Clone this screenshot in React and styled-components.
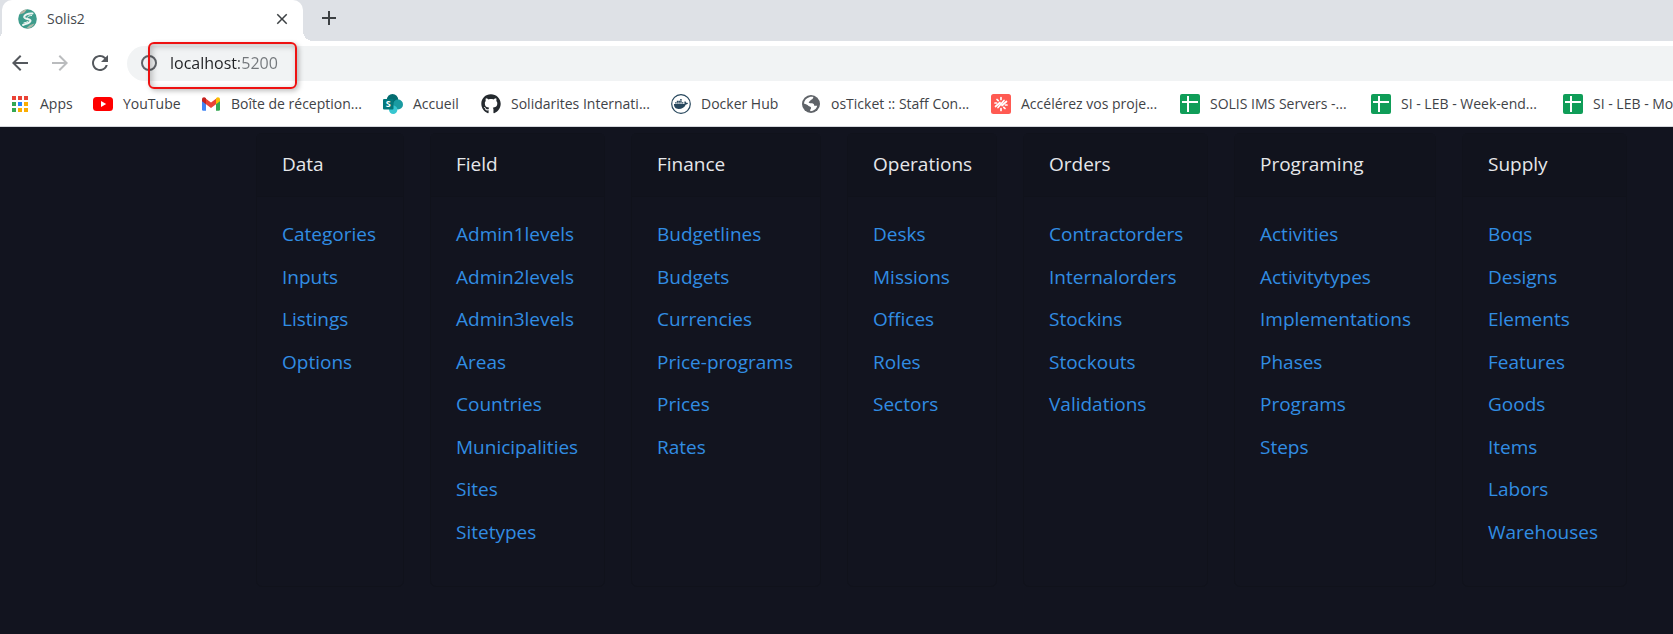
import React from "react";
import styled, { createGlobalStyle } from "styled-components";
import {
  MdArrowBack,
  MdArrowForward,
  MdRefresh,
  MdClose,
  MdAdd,
} from "react-icons/md";
import { FaGithub, FaDocker } from "react-icons/fa";

const GlobalStyle = createGlobalStyle`
  *, *::before, *::after { box-sizing: border-box; }
  body {
    margin: 0;
    background: #12141f;
    font-family: "Open Sans", "Noto Sans", sans-serif;
    overflow-x: hidden;
  }
`;

const Page = styled.div`
  min-height: 100vh;
  display: flex;
  flex-direction: column;
  background: #12141f;
`;

const Browser = styled.header`
  background: #fff;
  border-bottom: 1px solid #d5d7dc;
  overflow: hidden;
`;

const TabStrip = styled.div`
  display: flex;
  height: 41px;
  padding-left: 2px;
  background: #dee1e6;
`;

const Tab = styled.div`
  position: relative;
  display: flex;
  align-items: center;
  width: 301px;
  padding: 0 12px 4px 16px;
  border-radius: 10px 10px 0 0;
  background: #fff;

  &::before,
  &::after {
    content: "";
    position: absolute;
    bottom: 0;
    width: 10px;
    height: 10px;
  }
  &::before {
    right: 100%;
    background: radial-gradient(circle at 0 0, transparent 10px, #fff 10px);
  }
  &::after {
    left: 100%;
    background: radial-gradient(circle at 100% 0, transparent 10px, #fff 10px);
  }
`;

const TabTitle = styled.span`
  flex: 1;
  margin-left: 10px;
  font-size: 14px;
  line-height: 20px;
  color: #45494d;
`;

const IconButton = styled.button`
  display: flex;
  align-items: center;
  justify-content: center;
  flex: none;
  width: ${(p) => p.$size || 24}px;
  height: ${(p) => p.$size || 24}px;
  padding: 0;
  border: 0;
  background: none;
  color: ${(p) => p.$color || "#54585d"};
`;

const NewTab = styled(IconButton)`
  margin: 6px 0 0 14px;
  color: #3c4043;
`;

const Toolbar = styled.div`
  display: flex;
  align-items: center;
  gap: 16px;
  height: 44px;
  padding-left: 8px;
`;

const AddressBar = styled.div`
  position: relative;
  flex: 1;
  display: flex;
  align-items: center;
  gap: 11px;
  height: 35px;
  margin-left: -1px;
  padding-left: 12px;
  border-radius: 18px 0 0 18px;
  background: #f1f3f4;
  color: #5f6368;
`;

const UrlInput = styled.input`
  flex: 1;
  min-width: 0;
  padding: 0;
  border: 0;
  outline: 0;
  font: 16px/24px "Open Sans", "Noto Sans", sans-serif;
  background: linear-gradient(to right, #202124 69px, #73777b 69px);
  -webkit-background-clip: text;
  background-clip: text;
  -webkit-text-fill-color: transparent;
`;

const Highlight = styled.div`
  position: absolute;
  top: -4px;
  left: 21px;
  width: 149px;
  height: 47px;
  border: 2px solid #ee1111;
  border-radius: 6px;
  box-shadow: 2px 2px 5px rgba(0, 0, 0, 0.25), inset 2px 2px 6px rgba(0, 0, 0, 0.25);
  pointer-events: none;
`;

const BookmarkBar = styled.nav`
  display: flex;
  gap: 20px;
  height: 41px;
  padding: 0 0 4px 10px;
`;

const Bookmark = styled.a`
  display: flex;
  align-items: center;
  gap: 10px;
  flex: none;
  color: #3f4347;
  text-decoration: none;
  font-size: 14px;
  line-height: 20px;

  svg {
    flex: none;
  }
`;

const BookmarkLabel = styled.span`
  width: ${(p) => p.$width}px;
  white-space: nowrap;
`;

const Menu = styled.main`
  display: grid;
  grid-template-columns: 148px 175px 190px 150px 185px 202px 165px;
  gap: 26px;
  padding: 6px 0 47px 256px;
  overflow: hidden;
`;

const Card = styled.section`
  border: 1px solid #10121b;
  border-radius: 6px;
`;

const CardTitle = styled.h2`
  margin: 0;
  padding: 15px 25px 16px;
  border-bottom: 1px solid #10121b;
  background: #11131d;
  font-size: 19px;
  font-weight: 400;
  line-height: 31px;
  color: #e6e7ea;
`;

const LinkList = styled.ul`
  display: grid;
  grid-template-rows: repeat(8, 1fr);
  align-items: center;
  height: 340px;
  margin: 16px 0 33px;
  padding: 0 25px;
  list-style: none;
`;

const MenuLink = styled.a`
  color: #318de3;
  font-size: 19px;
  line-height: 30px;
  text-decoration: none;
  white-space: nowrap;

  &:hover {
    text-decoration: underline;
  }
`;

const SolisLogo = () => (
  <svg width="19" height="20" viewBox="0 0 19 20" aria-hidden="true">
    <ellipse cx="9.5" cy="10" rx="9.3" ry="9.8" fill="#3d9c8c" />
    <path d="M1.5 5.5A9.3 9.8 0 0 1 9 .3L6 4z" fill="#b9b5a4" />
    <path d="M8 19.6a9.3 9.8 0 0 0 8.500-5L12 16z" fill="#a9b8a8" />
    <path
      d="M14.500 4.500C10 4 6 6 6.200 8.200c.3 2.300 6.600 1.200 6.300 3.600-.2 2-4 2.800-7.500 4.200"
      fill="none"
      stroke="#eef5f2"
      strokeWidth="2"
      strokeLinecap="round"
    />
    <path d="M14 6.500c-2.500 0-4.500.8-4.500 2M10 12.500c-1 .8-3 1-4.500 1.500" fill="none" stroke="#eef5f2" />
  </svg>
);

const InfoIcon = () => (
  <svg width="20" height="20" viewBox="0 0 20 20" aria-hidden="true">
    <circle cx="10" cy="10" r="7" fill="none" stroke="#5f6368" strokeWidth="2" />
    <path d="M10 9v5M10 6v2" stroke="#5f6368" strokeWidth="2" />
  </svg>
);

const APP_COLORS = [
  ["#ea4335", "#ea4335", "#ea4335"],
  ["#34a853", "#2684fc", "#fbad03"],
  ["#34a853", "#fbad03", "#fbad03"],
];

const AppsIcon = () => (
  <svg width="20" height="20" viewBox="0 0 20 20" aria-hidden="true">
    {APP_COLORS.map((row, y) =>
      row.map((c, x) => (
        <rect key={`${x}${y}`} x={2 + x * 6} y={2 + y * 6} width="4" height="4" fill={c} />
      ))
    )}
  </svg>
);

const YoutubeIcon = () => (
  <svg width="20" height="20" viewBox="0 0 20 20" aria-hidden="true">
    <rect y="3" width="20" height="14" rx="3.500" fill="#f00" />
    <path d="M8 7l5.200 3L8 13z" fill="#fff" />
  </svg>
);

const GmailIcon = () => (
  <svg width="20" height="20" viewBox="0 0 20 20" aria-hidden="true">
    <path d="M1 5.500V15.500a1.200 1.200 0 0 0 1.200 1.200H5V8z" fill="#4285f4" />
    <path d="M15 8v8.700h2.800a1.200 1.200 0 0 0 1.200-1.200V5.500z" fill="#34a853" />
    <path d="M5 4.800l5 3.800 5-3.800v5.400l-5 3.800-5-3.800z" fill="#ea4335" />
    <path d="M1 5.500C1 3.300 3.300 2.700 5 4.200v6L1 7.200z" fill="#c5221f" />
    <path d="M19 5.500c0-2.200-2.300-2.800-4-1.300v6l4-3z" fill="#fbbc04" />
  </svg>
);

const SharepointIcon = () => (
  <svg width="20" height="20" viewBox="0 0 20 20" aria-hidden="true">
    <circle cx="9.500" cy="5.800" r="5.800" fill="#036c70" />
    <circle cx="15" cy="10.500" r="5" fill="#1a9ba1" />
    <circle cx="10.200" cy="15.800" r="4.200" fill="#37c6d0" />
    <rect y="5" width="10.500" height="10.500" rx="1" fill="#03787c" />
    <text
      x="5.200"
      y="13.300"
      textAnchor="middle"
      fontFamily="Open Sans, sans-serif"
      fontWeight="700"
      fontSize="9"
      fill="#fff"
    >
      S
    </text>
  </svg>
);

const DockerIcon = () => (
  <svg width="20" height="20" viewBox="0 0 20 20" aria-hidden="true">
    <circle cx="10" cy="10" r="9.300" fill="#fff" stroke="#27475d" strokeWidth="1.200" />
    <FaDocker x="3" y="3" width="14" height="14" color="#27475d" />
  </svg>
);

const GlobeIcon = () => (
  <svg width="20" height="20" viewBox="0 0 20 20" aria-hidden="true">
    <circle cx="10" cy="10" r="9" fill="#5f6368" />
    <path
      d="M8.800 2.900c1.600-.3 2.600-.2 3.600.2-.4 1.700-1.100 2.500-2.700 2.800-.4 1.500-1.600 1.200-2 2.300.2 1.300 2.100.9 3.500 1 1.800.3 2 1.600 2 2.600h3c-.3 2-2 4-4.400 5-.900.3-1.800.4-2.600.3-.3-1.500.8-1.900.9-3.300-.3-1.600-1.900-1.300-2.800-2.100C6.400 10.700 5 10 2.900 9.400 3.300 6 5.600 3.700 8.800 2.900z"
      fill="#fff"
    />
  </svg>
);

const MalwareIcon = () => (
  <svg width="20" height="20" viewBox="0 0 20 20" aria-hidden="true">
    <rect width="20" height="20" rx="2.500" fill="#ff5a52" />
    <g stroke="#fff" strokeWidth="1.700" strokeLinecap="round">
      <path d="M4.500 12.500L9 8.500M7 13.500L13 6.500M11 11.500L15.500 7.500" />
      <path d="M4 9h1.500M6 5.500l1.200 1.200M10 3.500v2M14.500 11h1.500M12.800 13.300l1.200 1.200M10 14.500v2" />
    </g>
  </svg>
);

const SheetIcon = () => (
  <svg width="20" height="20" viewBox="0 0 20 20" aria-hidden="true">
    <rect width="20" height="20" rx="2" fill="#0f9d58" />
    <path d="M2 8h16M8 2v16" stroke="#fff" strokeWidth="2" />
  </svg>
);

const BOOKMARKS = [
  { label: "Apps", width: 33, icon: <AppsIcon /> },
  { label: "YouTube", width: 58, icon: <YoutubeIcon /> },
  { label: "Boîte de réception...", width: 132, icon: <GmailIcon /> },
  { label: "Accueil", width: 48, icon: <SharepointIcon /> },
  { label: "Solidarites Internati...", width: 140, icon: <FaGithub size={20} color="#24292e" /> },
  { label: "Docker Hub", width: 80, icon: <DockerIcon /> },
  { label: "osTicket :: Staff Con...", width: 140, icon: <GlobeIcon /> },
  { label: "Accélérez vos proje...", width: 139, icon: <MalwareIcon /> },
  { label: "SOLIS IMS Servers -...", width: 141, icon: <SheetIcon /> },
  { label: "SI - LEB - Week-end...", width: 142, icon: <SheetIcon /> },
  { label: "SI - LEB - Mo...", width: 142, icon: <SheetIcon /> },
];

const MENU = [
  ["Data", ["Categories", "Inputs", "Listings", "Options"]],
  [
    "Field",
    [
      "Admin1levels",
      "Admin2levels",
      "Admin3levels",
      "Areas",
      "Countries",
      "Municipalities",
      "Sites",
      "Sitetypes",
    ],
  ],
  ["Finance", ["Budgetlines", "Budgets", "Currencies", "Price-programs", "Prices", "Rates"]],
  ["Operations", ["Desks", "Missions", "Offices", "Roles", "Sectors"]],
  ["Orders", ["Contractorders", "Internalorders", "Stockins", "Stockouts", "Validations"]],
  [
    "Programing",
    ["Activities", "Activitytypes", "Implementations", "Phases", "Programs", "Steps"],
  ],
  [
    "Supply",
    ["Boqs", "Designs", "Elements", "Features", "Goods", "Items", "Labors", "Warehouses"],
  ],
];

export default function App() {
  return (
    <Page>
      <GlobalStyle />
      <Browser>
        <TabStrip>
          <Tab>
            <SolisLogo />
            <TabTitle>Solis2</TabTitle>
            <IconButton $size={18} $color="#3c4043" aria-label="Close tab">
              <MdClose size={18} />
            </IconButton>
          </Tab>
          <NewTab aria-label="New tab">
            <MdAdd size={24} />
          </NewTab>
        </TabStrip>
        <Toolbar>
          <IconButton aria-label="Back">
            <MdArrowBack size={24} />
          </IconButton>
          <IconButton aria-label="Forward" $color="#babcbe">
            <MdArrowForward size={24} />
          </IconButton>
          <IconButton aria-label="Reload">
            <MdRefresh size={24} />
          </IconButton>
          <AddressBar>
            <InfoIcon />
            <UrlInput aria-label="Address" defaultValue="localhost:5200" spellCheck={false} />
            <Highlight />
          </AddressBar>
        </Toolbar>
        <BookmarkBar aria-label="Bookmarks">
          {BOOKMARKS.map((b) => (
            <Bookmark href="#" key={b.label}>
              {b.icon}
              <BookmarkLabel $width={b.width}>{b.label}</BookmarkLabel>
            </Bookmark>
          ))}
        </BookmarkBar>
      </Browser>
      <Menu>
        {MENU.map(([title, links]) => (
          <Card key={title}>
            <CardTitle>{title}</CardTitle>
            <LinkList>
              {links.map((l) => (
                <li key={l}>
                  <MenuLink href="#">{l}</MenuLink>
                </li>
              ))}
            </LinkList>
          </Card>
        ))}
      </Menu>
    </Page>
  );
}
